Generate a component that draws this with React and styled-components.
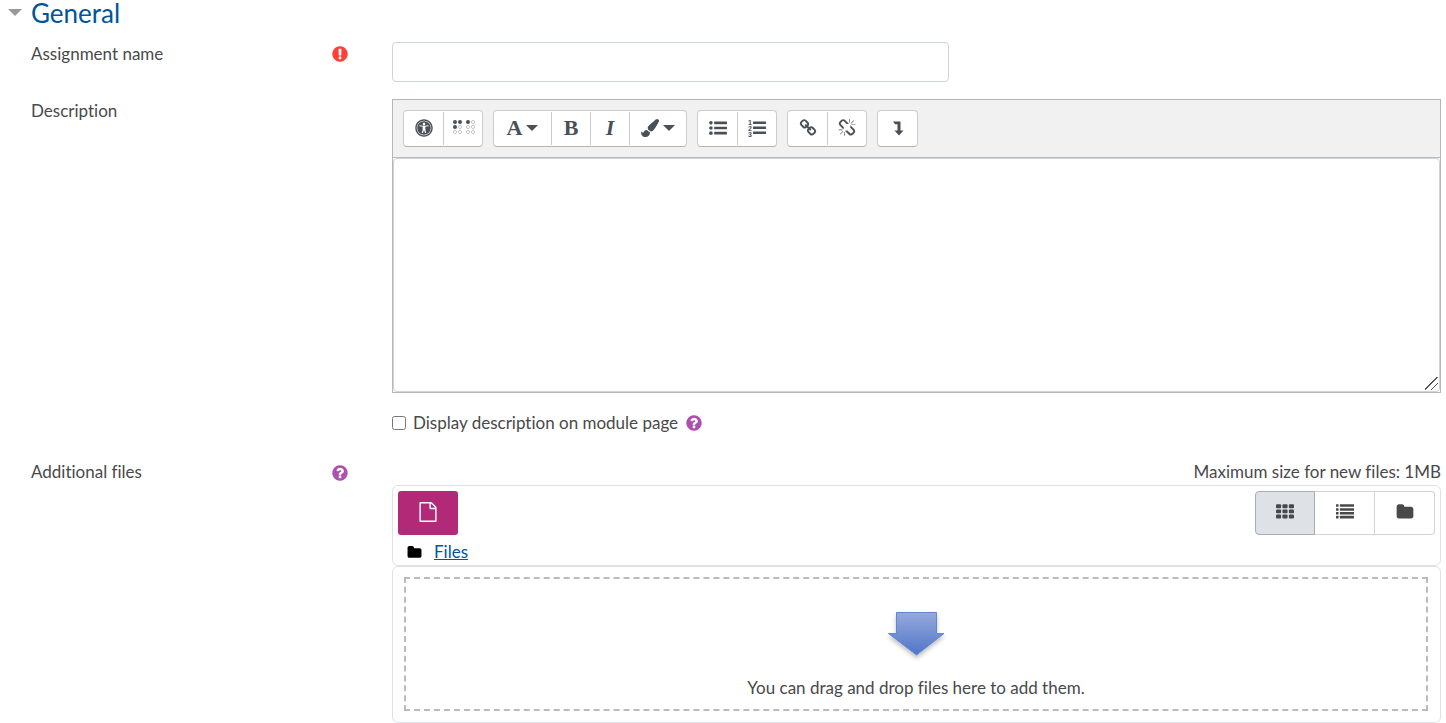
import styled, { createGlobalStyle } from "styled-components";
import { FaPaintBrush, FaUniversalAccess } from "react-icons/fa";

const GlobalStyle = createGlobalStyle`
  * {
    box-sizing: border-box;
  }
  body {
    margin: 0;
    background: #fff;
    color: #494949;
    font-family: Lato, "Liberation Sans", sans-serif;
    font-size: 17px;
    font-variant-ligatures: none;
    line-height: 24px;
  }
  button, input, textarea {
    font: inherit;
    color: inherit;
  }
`;

const Form = styled.form`
  padding: 0 5px 12px 8px;
`;
const Legend = styled.h3`
  display: flex;
  align-items: center;
  gap: 9px;
  margin: 0 0 17px;
  height: 25px;
  font-size: 26px;
  font-weight: 400;
  color: #00549a;
`;
const Caret = styled.span`
  width: 0;
  border: solid transparent;
  border-width: ${(p) => (p.$small ? "6px 6px 0" : "7px 7px 0")};
  border-top-color: ${(p) => p.$color};
`;
const Row = styled.div`
  display: grid;
  grid-template-columns: 318px minmax(0, 1fr);
  column-gap: 43px;
  padding-left: 23px;
  margin-bottom: ${(p) => p.$gap || 0}px;
`;
const LabelCell = styled.div`
  display: flex;
  justify-content: space-between;
  align-items: flex-start;
`;
const Glyph = styled.svg`
  display: block;
  width: ${(p) => p.$size || 18}px;
  height: ${(p) => p.$size || 18}px;
  fill: ${(p) => p.$color || "currentColor"};
`;
const HelpButton = styled.button`
  display: flex;
  padding: 4px 0;
  border: none;
  background: none;
`;
const Mark = styled.span`
  padding: 3px 0;
`;
const TextInput = styled.input`
  width: 557px;
  max-width: 100%;
  height: 40px;
  padding: 6px 12px;
  border: 1px solid #ced4da;
  border-radius: 4px;
`;

const Editor = styled.div`
  border: 1px solid #b6b6b9;
`;
const Toolbar = styled.div`
  display: flex;
  flex-wrap: wrap;
  gap: 10px;
  padding: 10px;
  background: #f1f1f1;
  border-bottom: 1px solid #bbb;
`;
const Group = styled.div`
  display: flex;
  height: 37px;
  padding: 1px 0;
  background: #fff;
  border: 1px solid #ccc;
  border-bottom-color: #b3b3b3;
  border-radius: 4px;
`;
const Tool = styled.button`
  display: flex;
  align-items: center;
  justify-content: center;
  gap: 4px;
  width: ${(p) => (p.$wide ? 57 : 39)}px;
  padding: 0 0 2px;
  border: none;
  background: none;
  color: #495057;
  & + & {
    border-left: 1px solid #ccc;
  }
`;
const Letter = styled.span`
  font-family: "Liberation Serif", serif;
  font-size: 22px;
  font-weight: 700;
  font-style: ${(p) => (p.$italic ? "italic" : "normal")};
`;
const TextArea = styled.textarea`
  display: block;
  width: 100%;
  height: 234px;
  padding: 6px 12px;
  border: 1px solid #ced4da;
  border-radius: 4px;
  resize: vertical;
  &::-webkit-resizer {
    background: linear-gradient(
        135deg,
        transparent 46%,
        #555 46%,
        #555 51%,
        transparent 51%,
        transparent 70%,
        #555 70%,
        #555 75%,
        transparent 75%
      )
      1px 1px / 13px 13px no-repeat;
  }
`;
const CheckRow = styled.div`
  display: flex;
  align-items: center;
  gap: 7px;
  margin: 17px 0 24px;
`;
const Check = styled.input`
  width: 14px;
  height: 14px;
  margin: 0;
`;

const Limit = styled.div`
  text-align: right;
  height: 25px;
`;
const Panel = styled.div`
  border: 1px solid #dee2e6;
  border-radius: 6px;
  padding: ${(p) => p.$pad};
`;
const Bar = styled.div`
  display: flex;
  justify-content: space-between;
`;
const AddButton = styled.button`
  display: flex;
  align-items: center;
  justify-content: center;
  width: 60px;
  height: 44px;
  padding: 0 0 2px;
  border: none;
  border-radius: 3px;
  background: #b22a77;
  color: #fff;
`;
const Views = styled.div`
  display: flex;
`;
const ViewButton = styled.button`
  display: flex;
  align-items: center;
  justify-content: center;
  width: 60px;
  height: 44px;
  padding: 0 0 3px;
  border: 1px solid ${(p) => (p.$active ? "#a6adb4" : "#ced4da")};
  background: ${(p) => (p.$active ? "#dee2e6" : "#fff")};
  &:first-child {
    border-radius: 4px 0 0 4px;
  }
  &:last-child {
    border-radius: 0 4px 4px 0;
  }
  & + & {
    border-left: none;
  }
`;
const PathBar = styled.div`
  display: flex;
  align-items: center;
  gap: 12px;
  padding: 5px 9px 1px;
`;
const PathLink = styled.a`
  color: #00549a;
`;
const DropZone = styled.div`
  display: flex;
  flex-direction: column;
  align-items: center;
  gap: 13px;
  height: 134px;
  padding-top: 30px;
  border: 2px dashed #bbb;
`;

const PATHS = {
  required:
    "M896 128q209 0 385.5 103t279.5 279.5 103 385.5-103 385.5-279.5 279.5-385.5 103-385.5-103-279.5-279.5-103-385.5 103-385.5 279.5-279.5 385.5-103zm128 1247v-190q0-14-9-23.5t-22-9.5h-192q-13 0-23 10t-10 23v190q0 13 10 23t23 10h192q13 0 22-9.5t9-23.5zm-2-344l18-621q0-12-10-18-10-8-24-8h-220q-14 0-24 8-10 6-10 18l17 621q0 10 10 17.5t24 7.5h185q14 0 23.5-7.5t10.5-17.5z",
  help: "M1024 1376v-192q0-14-9-23t-23-9h-192q-14 0-23 9t-9 23v192q0 14 9 23t23 9h192q14 0 23-9t9-23zm256-672q0-88-55.5-163t-138.5-116-170-41q-243 0-371 213-15 24 8 42l132 100q7 6 19 6 16 0 25-12 53-68 86-92 34-24 86-24 48 0 85.5 26t37.5 59q0 38-20 61t-68 45q-63 28-115.5 86.5t-52.5 125.5v36q0 14 9 23t23 9h192q14 0 23-9t9-23q0-19 21.5-49.5t54.5-49.5q32-18 49-28.5t46-35 44.5-48 28-60.5 12.5-81zm384 192q0 209-103 385.5t-279.5 279.5-385.5 103-385.5-103-279.5-279.5-103-385.5 103-385.5 279.5-279.5 385.5-103 385.5 103 279.5 279.5 103 385.5z",
  folder:
    "M1728 608v704q0 92-66 158t-158 66h-1216q-92 0-158-66t-66-158v-960q0-92 66-158t158-66h320q92 0 158 66t66 158v32h672q92 0 158 66t66 158z",
  file: "M1596 380q28 28 48 76t20 88v1152q0 40-28 68t-68 28h-1344q-40 0-68-28t-28-68v-1600q0-40 28-68t68-28h896q40 0 88 20t76 48zm-444-244v376h376q-10-29-22-41l-313-313q-12-12-41-22zm384 1528v-1024h-416q-40 0-68-28t-28-68v-416h-768v1536h1280z",
  link: "M1520 1216q0-40-28-68l-208-208q-28-28-68-28-42 0-72 32 3 3 19 18.5t21.5 21.5 15 19 13 25.5 3.5 27.5q0 40-28 68t-68 28q-15 0-27.5-3.5t-25.5-13-19-15-21.5-21.5-18.5-19q-33 31-33 73 0 40 28 68l206 207q27 27 68 27 40 0 68-26l147-146q28-28 28-67zm-703-705q0-40-28-68l-206-207q-28-28-68-28-39 0-68 27l-147 146q-28 28-28 67 0 40 28 68l208 208q27 27 68 27 42 0 72-31-3-3-19-18.5t-21.5-21.5-15-19-13-25.5-3.5-27.5q0-40 28-68t68-28q15 0 27.5 3.5t25.5 13 19 15 21.5 21.5 18.5 19q33-31 33-73zm895 705q0 120-85 203l-147 146q-83 83-203 83-121 0-204-85l-206-207q-83-83-83-203 0-123 88-209l-88-88q-86 88-208 88-120 0-204-84l-208-208q-84-84-84-204t85-203l147-146q83-83 203-83 121 0 204 85l206 207q83 83 83 203 0 123-88 209l88 88q86-88 208-88 120 0 204 84l208 208q84 84 84 204z",
  unlink:
    "M503 1271l-256 256q-10 9-23 9-12 0-23-9-9-10-9-23t9-23l256-256q10-9 23-9t23 9q9 10 9 23t-9 23zm169 41v320q0 14-9 23t-23 9-23-9-9-23v-320q0-14 9-23t23-9 23 9 9 23zm-224-224q0 14-9 23t-23 9h-320q-14 0-23-9t-9-23 9-23 23-9h320q14 0 23 9t9 23zm1264 128q0 120-85 203l-147 146q-83 83-203 83-121 0-204-85l-334-335q-21-21-42-56l239-18 273 274q28 28 68 27.5t68-27.5l147-146q28-28 28-67 0-40-28-68l-274-275 18-239q35 21 56 42l336 336q84 86 84 204zm-617-724l-239 18-273-274q-28-28-68-28-39 0-68 27l-147 146q-28 28-28 67 0 40 28 68l274 274-18 240q-35-21-56-42l-336-336q-84-86-84-204 0-120 85-203l147-146q83-83 203-83 121 0 204 85l334 335q21 21 42 56zm633 84q0 14-9 23t-23 9h-320q-14 0-23-9t-9-23 9-23 23-9h320q14 0 23 9t9 23zm-544-544v320q0 14-9 23t-23 9-23-9-9-23v-320q0-14 9-23t23-9 23 9 9 23zm407 151l-256 256q-11 9-23 9t-23-9q-9-10-9-23t9-23l256-256q10-9 23-9t23 9q9 10 9 23t-9 23z",
};

const Icon = ({ name, size, color }) => (
  <Glyph viewBox="0 0 1792 1792" $size={size} $color={color} aria-hidden="true">
    <path d={PATHS[name]} />
  </Glyph>
);

// two braille cells, raised dots are filled
const BrailleIcon = () => (
  <Glyph viewBox="0 0 24 24" $size={24} aria-hidden="true">
    {[4, 9, 17, 22].map((x, col) =>
      [6, 11, 16].map((y, row) => {
        const on = (row === 0 && col < 3) || (row === 1 && col === 0);
        return on ? (
          <circle key={x + "-" + y} cx={x} cy={y} r="2" />
        ) : (
          <circle key={x + "-" + y} cx={x} cy={y} r="1.6" fill="none" stroke="#aaadb1" strokeWidth="0.7" />
        );
      })
    )}
  </Glyph>
);

const BulletIcon = () => (
  <Glyph viewBox="0 0 1792 1792" aria-hidden="true">
    {[384, 896, 1408].map((y) => (
      <g key={y}>
        <circle cx="192" cy={y} r="180" />
        <rect x="512" y={y - 128} width="1280" height="256" rx="32" />
      </g>
    ))}
  </Glyph>
);

const NumberIcon = () => (
  <Glyph viewBox="0 0 18 18" aria-hidden="true">
    {[1, 2, 3].map((n) => (
      <g key={n}>
        <text x="0" y={n * 6} fontSize="7" fontWeight="700" fontFamily="Liberation Sans">
          {n}
        </text>
        <rect x="5" y={n * 5 - 2.5} width="13" height="2.6" rx="0.4" />
      </g>
    ))}
  </Glyph>
);

const CollapseIcon = () => (
  <Glyph viewBox="0 0 18 18" aria-hidden="true">
    <path d="M4 2.500h7.500v9h3l-4.500 5-4.500-5h3v-6.300h-2.500z" />
  </Glyph>
);

const GridIcon = () => (
  <Glyph viewBox="0 0 1792 1792" aria-hidden="true">
    {[128, 640, 1152].map((y) =>
      [0, 640, 1280].map((x) => (
        <rect key={x + "-" + y} x={x} y={y} width="512" height="384" rx="96" />
      ))
    )}
  </Glyph>
);

const ListIcon = () => (
  <Glyph viewBox="0 0 1792 1792" aria-hidden="true">
    {[128, 512, 896, 1280].map((y) => (
      <g key={y}>
        <rect x="0" y={y} width="256" height="256" rx="32" />
        <rect x="384" y={y} width="1408" height="256" rx="32" />
      </g>
    ))}
  </Glyph>
);

const DropArrow = () => (
  <svg width="60" height="54" viewBox="0 0 60 54" aria-hidden="true">
    <defs>
      <linearGradient id="arrowFill" x1="0" y1="0" x2="0" y2="1">
        <stop offset="0" stopColor="#96a9dc" />
        <stop offset="1" stopColor="#5075c8" />
      </linearGradient>
      <filter id="arrowShadow" x="-20%" y="-20%" width="140%" height="150%">
        <feDropShadow dx="0" dy="3" stdDeviation="2" floodOpacity="0.25" />
      </filter>
    </defs>
    <path
      d="M10.500 3.500h40v21h7.500l-27.500 21.500-28-21.500h8z"
      fill="url(#arrowFill)"
      stroke="#6585d3"
      filter="url(#arrowShadow)"
    />
  </svg>
);

const Help = ({ label }) => (
  <HelpButton type="button" aria-label={label}>
    <Icon name="help" size={18} color="#ae4fb0" />
  </HelpButton>
);

export default function App() {
  return (
    <>
      <GlobalStyle />
      <Form>
        <Legend>
          <Caret $color="#999" />
          General
        </Legend>
        <Row $gap={17}>
          <LabelCell>
            <label htmlFor="name">Assignment name</label>
            <Mark>
              <Icon name="required" size={18} color="#ff3f38" />
            </Mark>
          </LabelCell>
          <TextInput id="name" type="text" />
        </Row>
        <Row>
          <LabelCell>
            <label htmlFor="description">Description</label>
          </LabelCell>
          <div>
            <Editor>
              <Toolbar>
                <Group>
                  <Tool type="button" aria-label="Accessibility checker">
                    <FaUniversalAccess size={18} />
                  </Tool>
                  <Tool type="button" aria-label="Screenreader helper">
                    <BrailleIcon />
                  </Tool>
                </Group>
                <Group>
                  <Tool type="button" $wide aria-label="Paragraph styles">
                    <Letter>A</Letter>
                    <Caret $small $color="#495057" />
                  </Tool>
                  <Tool type="button" aria-label="Bold">
                    <Letter>B</Letter>
                  </Tool>
                  <Tool type="button" aria-label="Italic">
                    <Letter $italic>I</Letter>
                  </Tool>
                  <Tool type="button" $wide aria-label="Font colour">
                    <FaPaintBrush size={18} />
                    <Caret $small $color="#495057" />
                  </Tool>
                </Group>
                <Group>
                  <Tool type="button" aria-label="Unordered list">
                    <BulletIcon />
                  </Tool>
                  <Tool type="button" aria-label="Ordered list">
                    <NumberIcon />
                  </Tool>
                </Group>
                <Group>
                  <Tool type="button" aria-label="Link">
                    <Icon name="link" />
                  </Tool>
                  <Tool type="button" aria-label="Unlink">
                    <Icon name="unlink" />
                  </Tool>
                </Group>
                <Group>
                  <Tool type="button" aria-label="Show more buttons">
                    <CollapseIcon />
                  </Tool>
                </Group>
              </Toolbar>
              <TextArea id="description" />
            </Editor>
            <CheckRow>
              <Check id="show" type="checkbox" />
              <label htmlFor="show">Display description on module page</label>
              <Help label="Help with Display description on module page" />
            </CheckRow>
          </div>
        </Row>
        <Row>
          <LabelCell>
            <span>Additional files</span>
            <Help label="Help with Additional files" />
          </LabelCell>
          <div>
            <Limit>Maximum size for new files: 1MB</Limit>
            <Panel $pad="5px 5px 0">
              <Bar>
                <AddButton type="button" aria-label="Add file">
                  <Icon name="file" size={20} />
                </AddButton>
                <Views>
                  <ViewButton type="button" $active aria-label="Display as icons">
                    <GridIcon />
                  </ViewButton>
                  <ViewButton type="button" aria-label="Display as list">
                    <ListIcon />
                  </ViewButton>
                  <ViewButton type="button" aria-label="Display as tree">
                    <Icon name="folder" />
                  </ViewButton>
                </Views>
              </Bar>
              <PathBar>
                <Icon name="folder" size={15} color="#000" />
                <PathLink href="#files">Files</PathLink>
              </PathBar>
            </Panel>
            <Panel $pad="10px 12px 11px 11px">
              <DropZone>
                <DropArrow />
                You can drag and drop files here to add them.
              </DropZone>
            </Panel>
          </div>
        </Row>
      </Form>
    </>
  );
}
